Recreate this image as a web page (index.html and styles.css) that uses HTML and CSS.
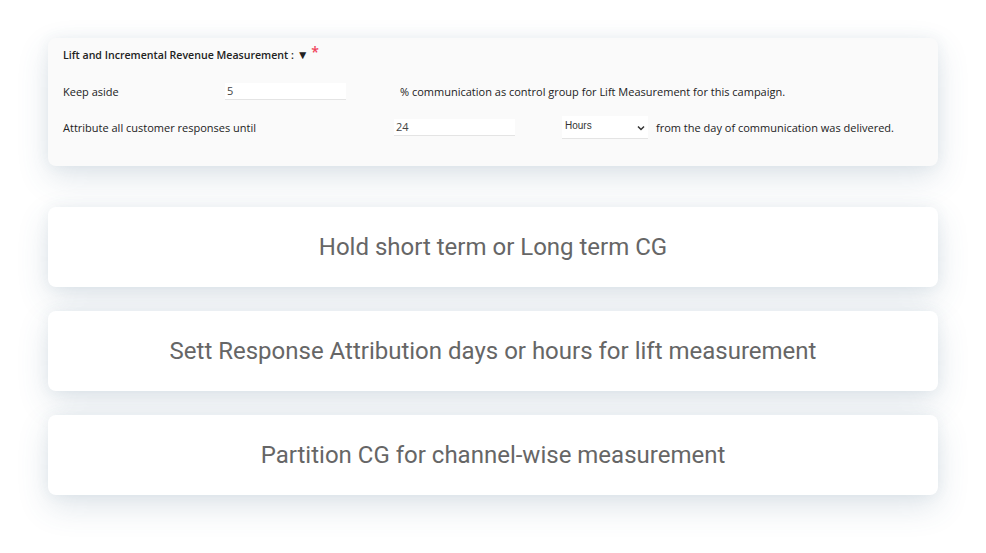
FILE: index.html
```html
<!DOCTYPE html>
<html>
<head>
<meta charset="utf-8">
<link rel="stylesheet" href="styles.css">
</head>
<body>
<div class="page">
  <section class="card form-card">
    <div class="title">Lift and Incremental Revenue Measurement : <span class="tri">&#9660;</span> <span class="req">*</span></div>
    <div class="row row1">
      <span class="label l1">Keep aside</span>
      <input class="field f1" type="text" value="5">
      <span class="after a1">% communication as control group for Lift Measurement for this campaign.</span>
    </div>
    <div class="row row2">
      <span class="label l2">Attribute all customer responses until</span>
      <input class="field f2" type="text" value="24">
      <div class="select"><span>Hours</span><svg width="8" height="6" viewBox="0 0 8 6"><path d="M1 1.5 L4 4.5 L7 1.5" fill="none" stroke="#333" stroke-width="1.5"/></svg></div>
      <span class="after a2">from the day of communication was delivered.</span>
    </div>
  </section>
  <section class="card big">Hold short term or Long term CG</section>
  <section class="card big">Sett Response Attribution days or hours for lift measurement</section>
  <section class="card big">Partition CG for channel-wise measurement</section>
</div>
</body>
</html>
```
FILE: styles.css
```css
html, body { margin: 0; padding: 0; background: #fff; }
.page {
  width: 890px;
  margin-left: 48px;
  padding-top: 38px;
  padding-bottom: 58px;
  display: flex;
  flex-direction: column;
}
.card {
  border-radius: 8px;
  box-shadow: 0 12px 32px rgba(60, 100, 130, 0.16), 0 0 14px rgba(60, 100, 130, 0.07);
  box-sizing: border-box;
}
.form-card {
  height: 128px;
  background: #fafafa;
  padding: 7px 15px 0 15px;
  font-family: "Open Sans", "Noto Sans", sans-serif;
  font-size: 11px;
  color: #222;
}
.title {
  font-weight: 600;
  font-size: 10.6px;
  height: 18px;
  line-height: 18px;
}
.tri { font-size: 12px; }
.req { color: #f0435a; font-size: 14px; position: relative; top: -2px; }
.row {
  display: flex;
  align-items: center;
}
.row1 { margin-top: 19px; height: 18px; }
.row2 { margin-top: 15px; height: 24px; }
.label { flex: none; }
.l1 { width: 162px; }
.l2 { width: 331px; }
.field {
  flex: none;
  width: 121px;
  height: 17px;
  box-sizing: border-box;
  border: none;
  border-bottom: 1px solid #e4e4e4;
  background: #fff;
  padding: 0 0 0 2px;
  font-family: "Open Sans", "Noto Sans", sans-serif;
  font-size: 11px;
  color: #444;
  outline: none;
}
.a1 { margin-left: 54px; }
.select {
  flex: none;
  margin-left: 47px;
  width: 86px;
  height: 23px;
  box-sizing: border-box;
  background: #fff;
  border-bottom: 1px solid #e4e4e4;
  display: flex;
  align-items: flex-start;
  justify-content: space-between;
  padding: 4px 3px 0 3px;
  font-family: "Liberation Sans", Arial, sans-serif;
  font-size: 10px;
  color: #333;
}
.select svg { margin-top: 5px; }
.a2 { margin-left: 8px; }
.big {
  height: 80px;
  background: #fff;
  margin-top: 24px;
  display: flex;
  align-items: center;
  justify-content: center;
  font-family: Roboto, "Liberation Sans", sans-serif;
  font-size: 24px;
  color: #666;
}
.form-card + .big { margin-top: 41px; }
```
